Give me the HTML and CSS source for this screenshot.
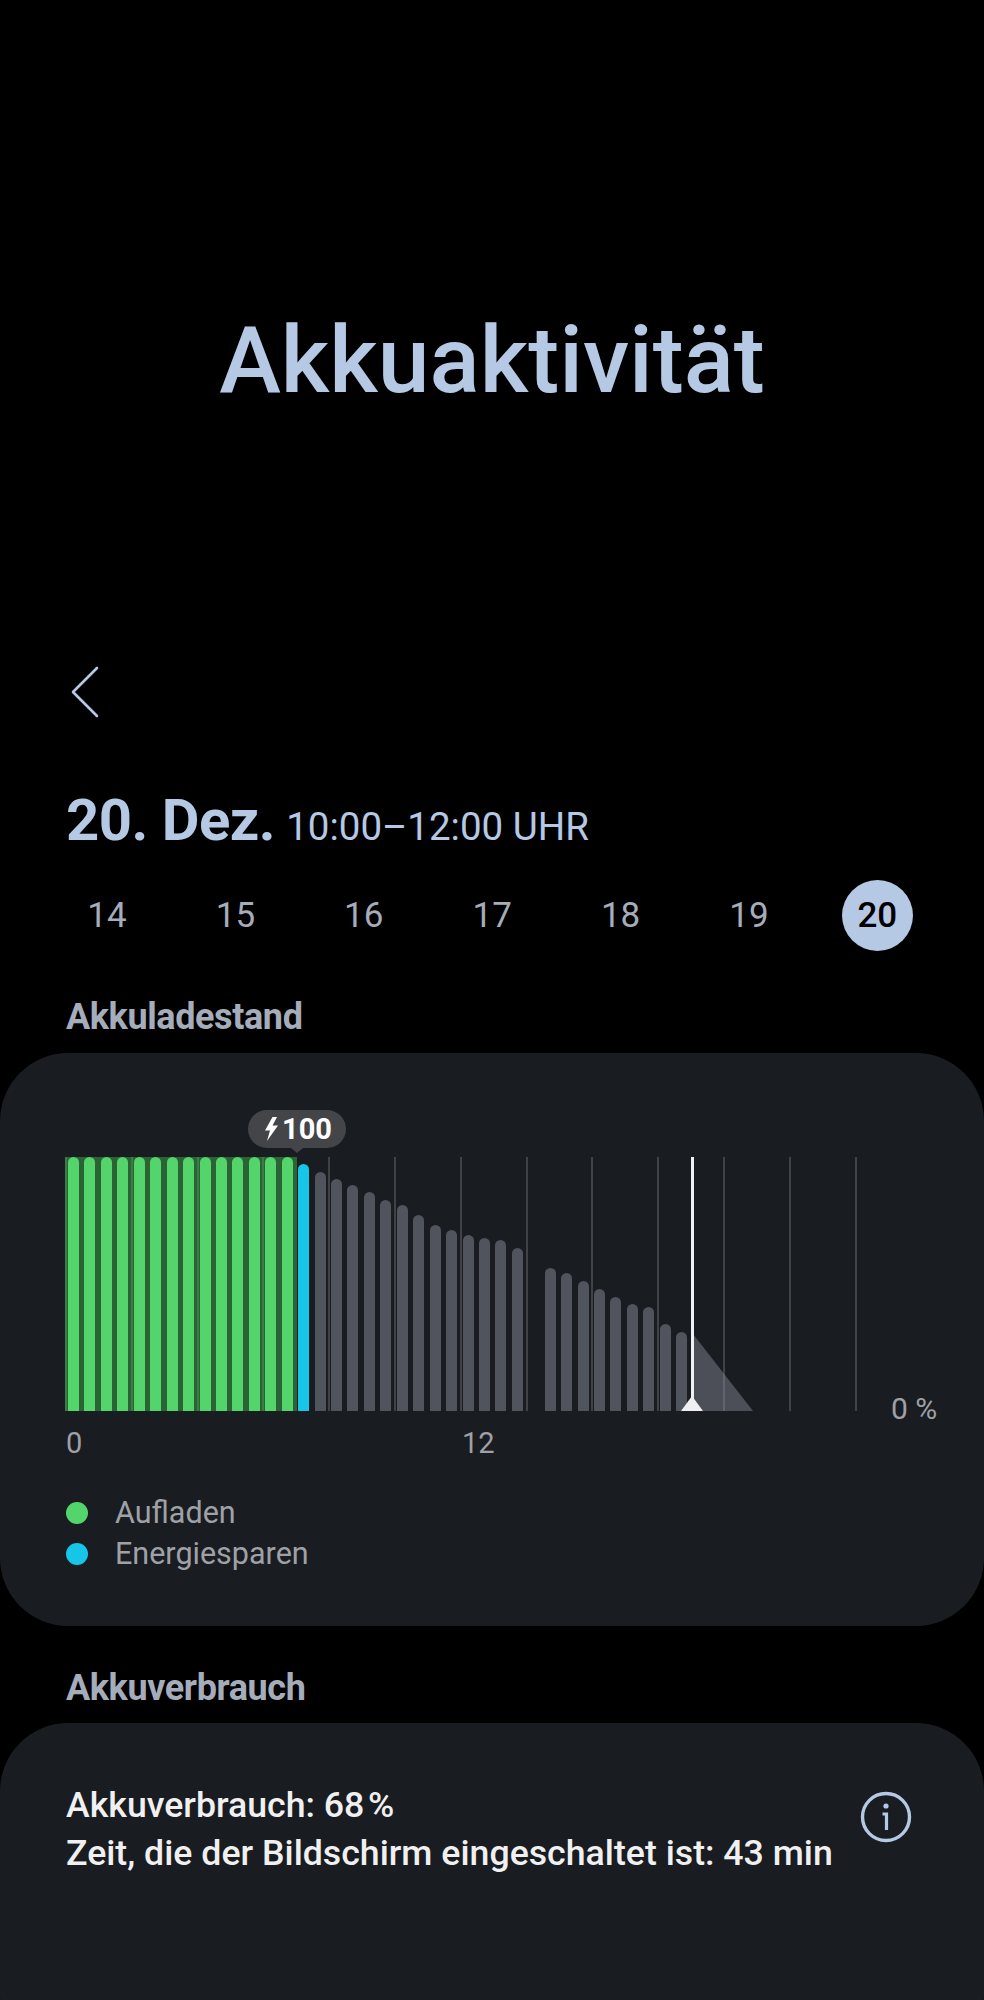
FILE: index.html
```html
<!DOCTYPE html>
<html lang="de">
<head>
  <meta charset="UTF-8" />
  <meta name="viewport" content="width=device-width, initial-scale=1.0"/>
  <title>Akkuaktivität</title>
  <link rel="stylesheet" href="styles.css">
</head>
<body>

  <header class="page-title">Akkuaktivität</header>

  <nav class="back">
    <svg width="28" height="52" viewBox="0 0 28 52" fill="none" stroke="#b5c8e4" stroke-width="2.6" stroke-linecap="round" stroke-linejoin="round">
      <path d="M26 2 L2 26 L26 50"/>
    </svg>
  </nav>

  <div class="date-line">
    <span class="date">20. Dez.</span>
    <span class="time">10:00–12:00 UHR</span>
  </div>

  <div class="days">
    <span class="day">14</span>
    <span class="day">15</span>
    <span class="day">16</span>
    <span class="day">17</span>
    <span class="day">18</span>
    <span class="day">19</span>
    <span class="day active">20</span>
  </div>

  <h2 class="section-title first">Akkuladestand</h2>

  <section class="card chart-card">
    <div class="chart">
      <!-- Hintergrund -->
      <div class="charging-band"></div>
      <div class="grid-lines">
        <i></i><i></i><i></i><i></i><i></i><i></i><i></i><i></i><i></i><i></i><i></i><i></i><i></i>
      </div>

      <svg class="forecast" width="60" height="77" viewBox="0 0 60 77">
        <path d="M0 0 L60 77 L0 77 Z" fill="#8b8f99" fill-opacity="0.45"/>
      </svg>

      <!-- Balken -->
      <div class="bars">
        <div class="bar green" style="height:254px"></div>
        <div class="bar green" style="height:254px"></div>
        <div class="bar green" style="height:254px"></div>
        <div class="bar green" style="height:254px"></div>
        <div class="bar green" style="height:254px"></div>
        <div class="bar green" style="height:254px"></div>
        <div class="bar green" style="height:254px"></div>
        <div class="bar green" style="height:254px"></div>
        <div class="bar green" style="height:254px"></div>
        <div class="bar green" style="height:254px"></div>
        <div class="bar green" style="height:254px"></div>
        <div class="bar green" style="height:254px"></div>
        <div class="bar green" style="height:254px"></div>
        <div class="bar green" style="height:254px"></div>
        <div class="bar blue" style="height:247px"></div>
        <div class="bar" style="height:239px"></div>
        <div class="bar" style="height:232px"></div>
        <div class="bar" style="height:226px"></div>
        <div class="bar" style="height:219px"></div>
        <div class="bar" style="height:211px"></div>
        <div class="bar" style="height:206px"></div>
        <div class="bar" style="height:196px"></div>
        <div class="bar" style="height:186px"></div>
        <div class="bar" style="height:181px"></div>
        <div class="bar" style="height:176px"></div>
        <div class="bar" style="height:173px"></div>
        <div class="bar" style="height:171px"></div>
        <div class="bar" style="height:163px"></div>
        <div class="bar" style="height:0"></div>
        <div class="bar" style="height:143px"></div>
        <div class="bar" style="height:138px"></div>
        <div class="bar" style="height:130px"></div>
        <div class="bar" style="height:122px"></div>
        <div class="bar" style="height:114px"></div>
        <div class="bar" style="height:107px"></div>
        <div class="bar" style="height:104px"></div>
        <div class="bar" style="height:87px"></div>
        <div class="bar" style="height:79px"></div>
      </div>

      <div class="marker"></div>
      <div class="marker-foot"></div>

      <div class="bubble">
        <svg width="13" height="24" viewBox="0 0 13 24"><path d="M7.5 0 L0 13.5 L5 13.5 L2 24 L13 8.5 L7.5 8.5 L12 0 Z" fill="#fff"/></svg>
        <span>100</span>
      </div>

      <span class="zero">0 %</span>
    </div>

    <div class="axis">
      <span class="tick">0</span>
      <span class="tick">12</span>
    </div>

    <ul class="legend">
      <li><i class="dot green"></i>Aufladen</li>
      <li><i class="dot blue"></i>Energiesparen</li>
    </ul>
  </section>

  <h2 class="section-title">Akkuverbrauch</h2>

  <section class="card usage-card">
    <div class="usage-text">
      <p>Akkuverbrauch: 68&#8202;%</p>
      <p>Zeit, die der Bildschirm eingeschaltet ist: 43 min</p>
    </div>
    <svg class="info" width="52" height="52" viewBox="0 0 52 52" fill="none" stroke="#b5c8e4">
      <circle cx="26" cy="26" r="23.5" stroke-width="3.4"/>
      <path d="M22.5 23 H26.5 V39" stroke-width="3.2"/>
      <circle cx="26" cy="15" r="2.6" fill="#b5c8e4" stroke="none"/>
    </svg>
  </section>

</body>
</html>
```

FILE: styles.css
```css
:root {
  --bg: #000000;
  --card-bg: #191c21;
  --accent: #b5c8e4;
  --muted: #a5acba;
  --label: #9fa1a6;
  --green: #54d56b;
  --blue: #17c5e8;
  --gray-bar: #50555d;
}

* {
  box-sizing: border-box;
}

html, body {
  height: 2000px;
  overflow: hidden;
}

body {
  margin: 0;
  font-family: Roboto, "Noto Sans", sans-serif;
  background-color: var(--bg);
  color: var(--accent);
}

.page-title {
  padding-top: 307px;
  height: 666px;
  line-height: 108px;
  text-align: center;
  font-size: 93px;
  font-weight: 500;
}

.back {
  display: flex;
  height: 52px;
  padding-left: 71px;
}

.date-line {
  display: flex;
  align-items: baseline;
  gap: 11px;
  margin-top: 69px;
  padding-left: 66px;
  line-height: 66px;
}

.date {
  font-size: 58px;
  font-weight: 700;
  letter-spacing: -0.5px;
}

.time {
  font-size: 38.5px;
}

.days {
  display: flex;
  margin-top: 20px;
  padding-left: 71.5px;
}

.day {
  flex: 0 0 71px;
  height: 71px;
  margin-right: 57.4px;
  border-radius: 50%;
  line-height: 72px;
  text-align: center;
  font-size: 35px;
  color: var(--muted);
}

.day.active {
  margin-right: 0;
  background: var(--accent);
  color: #000;
  font-weight: 500;
}

.section-title {
  margin: 42px 0 0;
  padding-left: 66px;
  height: 55px;
  line-height: 40px;
  font-size: 36px;
  font-weight: 700;
  letter-spacing: -0.4px;
  color: var(--muted);
}

.section-title.first {
  margin-top: 46px;
  height: 56px;
}

.card {
  background: var(--card-bg);
  border-radius: 68px;
}

.chart-card {
  height: 573px;
  padding: 104px 0 0 65px;
}

.chart {
  position: relative;
  width: 880px;
  height: 254px;
}

.charging-band {
  position: absolute;
  left: 0;
  top: 0;
  width: 232px;
  height: 254px;
  background: #2a6334;
}

.grid-lines {
  position: absolute;
  inset: 0;
  display: flex;
  gap: 63.8px;
}

.grid-lines i {
  flex: 0 0 2px;
  background: #404246;
}

.grid-lines i:nth-child(-n+4) {
  background: #3f7a49;
}

.forecast {
  position: absolute;
  left: 628px;
  bottom: 0;
}

.bars {
  position: absolute;
  left: 3px;
  bottom: 0;
  display: flex;
  align-items: flex-end;
  gap: 5.45px;
}

.bar {
  flex: 0 0 11px;
  border-radius: 5.5px 5.5px 0 0;
  background: var(--gray-bar);
}

.bar.green {
  background: var(--green);
}

.bar.blue {
  background: var(--blue);
}

.marker {
  position: absolute;
  left: 626px;
  top: 0;
  width: 3px;
  height: 254px;
  background: #f1f1f3;
}

.marker-foot {
  position: absolute;
  left: 616px;
  bottom: 0;
  width: 0;
  height: 0;
  border-left: 11.5px solid transparent;
  border-right: 11.5px solid transparent;
  border-bottom: 15px solid #efeff1;
}

.bubble {
  position: absolute;
  left: 183px;
  top: -47px;
  display: flex;
  align-items: center;
  justify-content: center;
  gap: 4px;
  width: 98px;
  height: 38px;
  padding-left: 3px;
  border-radius: 19px;
  background: #444549;
  color: #fff;
  font-size: 29px;
  font-weight: 700;
}

.bubble::after {
  content: "";
  position: absolute;
  left: 43px;
  bottom: -5px;
  border-left: 6px solid transparent;
  border-right: 6px solid transparent;
  border-top: 5px solid #444549;
}

.zero {
  position: absolute;
  left: 826px;
  bottom: -15px;
  font-size: 30px;
  line-height: 34px;
  color: var(--label);
}

.axis {
  display: flex;
  margin-top: 15px;
  padding-left: 1px;
  line-height: 34px;
  font-size: 29px;
  color: var(--label);
}

.tick {
  width: 396px;
}

.legend {
  list-style: none;
  margin: 32px 0 0;
  padding: 0 0 0 1px;
}

.legend li {
  display: flex;
  align-items: center;
  height: 41px;
  font-size: 30.5px;
  color: var(--label);
}

.dot {
  width: 22px;
  height: 22px;
  margin-right: 27px;
  border-radius: 50%;
}

.dot.green {
  background: var(--green);
}

.dot.blue {
  background: var(--blue);
}

.usage-card {
  display: flex;
  align-items: flex-start;
  height: 340px;
  padding: 58px 72px 0 66px;
  justify-content: space-between;
}

.usage-text p {
  margin: 0;
  line-height: 48px;
  font-size: 35.7px;
  font-weight: 500;
  color: #f0f0f0;
  white-space: nowrap;
}

.info {
  flex: none;
  margin-top: 10px;
}
```
